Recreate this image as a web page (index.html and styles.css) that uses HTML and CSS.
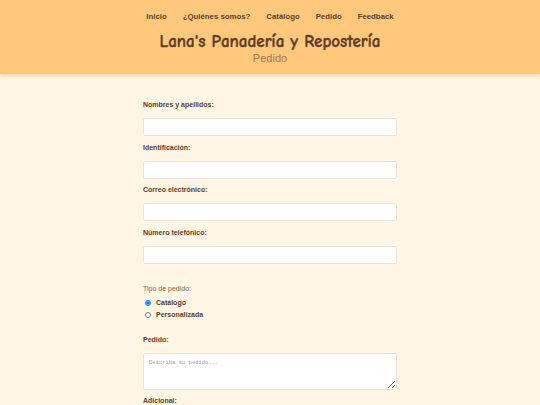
FILE: index.html
```html
<!DOCTYPE html>
<html lang="es">
<head>
<meta charset="utf-8">
<title>Pedido</title>
<link rel="stylesheet" href="styles.css">
</head>
<body>
<header class="site-header">
  <nav class="nav">
    <a href="#">Inicio</a>
    <a href="#">¿Quiénes somos?</a>
    <a href="#">Catálogo</a>
    <a href="#">Pedido</a>
    <a href="#">Feedback</a>
  </nav>
  <h1 class="title">Lana's Panadería y Repostería</h1>
  <p class="subtitle">Pedido</p>
</header>
<main class="content">
  <form class="form">
    <div class="field">
      <label class="label">Nombres y apellidos:</label>
      <input class="input" type="text">
    </div>
    <div class="field">
      <label class="label">Identificación:</label>
      <input class="input" type="text">
    </div>
    <div class="field">
      <label class="label">Correo electrónico:</label>
      <input class="input" type="text">
    </div>
    <div class="field">
      <label class="label">Número telefónico:</label>
      <input class="input" type="text">
    </div>
    <div class="radio-group">
      <p class="group-title">Tipo de pedido:</p>
      <label class="radio"><input type="radio" name="tipo" checked> Catálogo</label>
      <label class="radio"><input type="radio" name="tipo"> Personalizada</label>
    </div>
    <div class="field field-area">
      <label class="label">Pedido:</label>
      <textarea class="textarea" placeholder="Describa su pedido..."></textarea>
    </div>
    <div class="field">
      <label class="label">Adicional:</label>
    </div>
  </form>
</main>
</body>
</html>
```
FILE: styles.css
```css
html, body {
  margin: 0;
  padding: 0;
}
body {
  background: #fff5e4;
  font-family: "Liberation Sans", Arial, sans-serif;
  color: #5b3e2b;
}
.site-header {
  background: #ffc87c;
  box-shadow: 0 2px 4px rgba(180, 120, 40, 0.25);
  padding: 12px 0 10px;
  text-align: center;
}
.nav {
  display: flex;
  justify-content: center;
  gap: 16px;
}
.nav a {
  font-size: 7.8px;
  font-weight: bold;
  color: #5b3e2b;
  text-decoration: none;
  line-height: 10px;
}
.title {
  margin: 9px 0 0;
  font-family: "Comic Sans MS", "Comic Neue", cursive;
  font-size: 17px;
  font-weight: bold;
  line-height: 21px;
  color: #5b3e2b;
  -webkit-text-stroke: 0.35px #5b3e2b;
}
.subtitle {
  margin: 0;
  font-size: 11px;
  line-height: 12px;
  color: #a67552;
}
.content {
  display: flex;
  justify-content: center;
  padding-top: 27px;
}
.form {
  width: 254px;
  display: flex;
  flex-direction: column;
}
.field {
  display: flex;
  flex-direction: column;
  gap: 9px;
  margin-bottom: 7.7px;
}
.label {
  font-size: 7px;
  font-weight: bold;
  line-height: 8px;
}
.input {
  box-sizing: border-box;
  height: 18px;
  border: 1px solid #ebe3d6;
  border-radius: 2px;
  background: #fff;
  margin: 0;
}
.radio-group {
  margin-top: 13px;
  margin-bottom: 15px;
  display: flex;
  flex-direction: column;
}
.group-title {
  margin: 0 0 4px;
  font-size: 7px;
  line-height: 8px;
  color: #7a6656;
}
.radio {
  display: flex;
  align-items: center;
  gap: 5px;
  height: 12px;
  font-size: 7px;
  font-weight: bold;
  line-height: 12px;
}
.radio input {
  margin: 0 0 0 2px;
  width: 6px;
  height: 6px;
}
.textarea {
  box-sizing: border-box;
  height: 37px;
  border: 1px solid #ebe3d6;
  border-radius: 2px;
  background: #fff;
  margin: 0;
  padding: 5px;
  font-family: "Liberation Mono", monospace;
  font-size: 5.5px;
  resize: vertical;
}
.textarea::placeholder {
  color: #9a9a9a;
}
```
